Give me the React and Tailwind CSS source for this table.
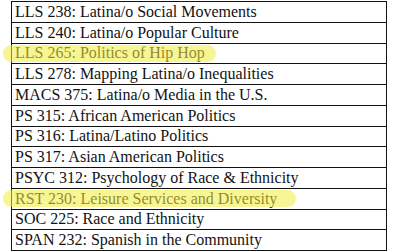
const courses = [
  { text: 'LLS 238: Latina/o Social Movements' },
  { text: 'LLS 240: Latina/o Popular Culture' },
  { text: 'LLS 265: Politics of Hip Hop', mark: 'w-[213px]' },
  { text: 'LLS 278: Mapping Latina/o Inequalities' },
  { text: 'MACS 375: Latina/o Media in the U.S.' },
  { text: 'PS 315: African American Politics' },
  { text: 'PS 316: Latina/Latino Politics' },
  { text: 'PS 317: Asian American Politics' },
  { text: 'PSYC 312: Psychology of Race & Ethnicity' },
  { text: 'RST 230: Leisure Services and Diversity', mark: 'w-[293px]' },
  { text: 'SOC 225: Race and Ethnicity' },
  { text: 'SPAN 232: Spanish in the Community' },
];

export default function App() {
  return (
    <div className="w-[393px] h-[251px] bg-white pt-[1px] overflow-hidden font-['Liberation_Serif',serif]">
      <div className="relative ml-[11px] w-[376px] border-t border-l border-r border-[#111]">
        {courses.map((c) => (
          <div key={c.text} className="relative h-[20.75px] border-b border-[#111] flex items-center pl-[3px]">
            <span className="text-[16px] leading-none text-[#121212]">{c.text}</span>
            {c.mark && (
              <div className={`absolute left-[-9px] top-[1.5px] h-[17px] rounded-full bg-[#f2ec3c]/55 ${c.mark}`} />
            )}
          </div>
        ))}
      </div>
    </div>
  );
}
